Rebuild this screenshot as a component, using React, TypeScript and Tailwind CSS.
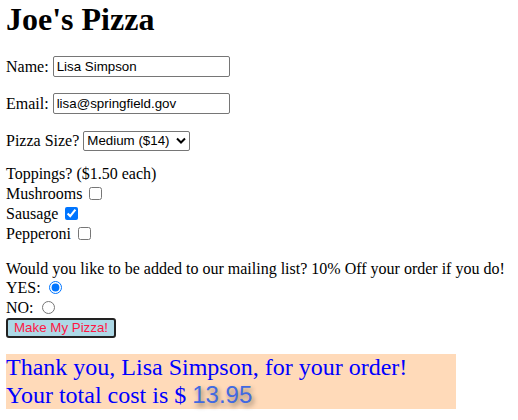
import React from "react";

export default function App() {
  const serif = { fontFamily: '"Liberation Serif", "Times New Roman", serif' };
  return (
    <div className="bg-white w-[518px] h-[420px] overflow-hidden px-[6px] text-black text-[16px] leading-normal" style={serif}>
      <h1 className="text-[32px] font-bold leading-[36px] m-0 pt-[1px]">Joe's Pizza</h1>

      <div className="mt-[19px] h-[21px] flex items-center">
        <span>Name:&nbsp;</span>
        <input
          readOnly
          value="Lisa Simpson"
          className="h-[21px] w-[177px] border border-[#767676] rounded-[2px] px-[3px] text-[13.33px] text-black bg-white outline-none [font-family:'Liberation_Sans',Arial,sans-serif]"
        />
      </div>

      <div className="mt-[16px] h-[21px] flex items-center">
        <span>Email:&nbsp;</span>
        <input
          readOnly
          value="lisa@springfield.gov"
          className="h-[21px] w-[177px] border border-[#767676] rounded-[2px] px-[3px] text-[13.33px] text-black bg-white outline-none [font-family:'Liberation_Sans',Arial,sans-serif]"
        />
      </div>

      <div className="mt-[16px] h-[21px] flex items-center">
        <span>Pizza Size?&nbsp;</span>
        <div className="h-[20px] w-[107px] border border-[#767676] rounded-[2px] bg-white flex items-center justify-between pl-[3px] pr-[3px] text-[13.33px] [font-family:'Liberation_Sans',Arial,sans-serif]">
          <span>Medium ($14)</span>
          <svg width="10" height="7" viewBox="0 0 10 7" fill="none">
            <path d="M1 1.5 L5 5.5 L9 1.5" stroke="#000" strokeWidth="2" />
          </svg>
        </div>
      </div>

      <div className="mt-[13px] leading-[19px]">
        <div>Toppings? ($1.50 each)</div>
        <div className="flex items-center h-[20px]">
          <span>Mushrooms</span>
          <input type="checkbox" readOnly className="ml-[7px] w-[13px] h-[13px] m-0" />
        </div>
        <div className="flex items-center h-[20px]">
          <span>Sausage</span>
          <input type="checkbox" readOnly checked className="ml-[7px] w-[13px] h-[13px] m-0" />
        </div>
        <div className="flex items-center h-[20px]">
          <span>Pepperoni</span>
          <input type="checkbox" readOnly className="ml-[7px] w-[13px] h-[13px] m-0" />
        </div>
      </div>

      <div className="mt-[16px] leading-[19px]">
        <div>Would you like to be added to our mailing list? 10% Off your order if you do!</div>
        <div className="flex items-center h-[19px]">
          <span>YES:</span>
          <input type="radio" readOnly checked name="ml" className="ml-[8px] w-[13px] h-[13px] m-0" />
        </div>
        <div className="flex items-center h-[20px]">
          <span>NO:</span>
          <input type="radio" readOnly name="ml2" className="ml-[8px] w-[13px] h-[13px] m-0" />
        </div>
        <div className="mt-[0px]">
          <button className="h-[20px] px-[6px] bg-[#add8e6] border-2 border-[#222] rounded-[3px] text-[13.33px] leading-[14px] text-[#ff1744] [font-family:'Liberation_Sans',Arial,sans-serif]">
            Make My Pizza!
          </button>
        </div>
      </div>

      <div className="mt-[16px] w-[450px] bg-[#ffdab9] text-[#0000ff] text-[24px] leading-[27px] py-[0px]">
        <div>Thank you, Lisa Simpson, for your order!</div>
        <div>
          Your total cost is ${" "}
          <span className="text-[#4169e1] [font-family:'Liberation_Sans',Arial,sans-serif] [text-shadow:2px_3px_5px_rgba(0,0,0,0.45)]">13.95</span>
        </div>
      </div>
    </div>
  );
}
